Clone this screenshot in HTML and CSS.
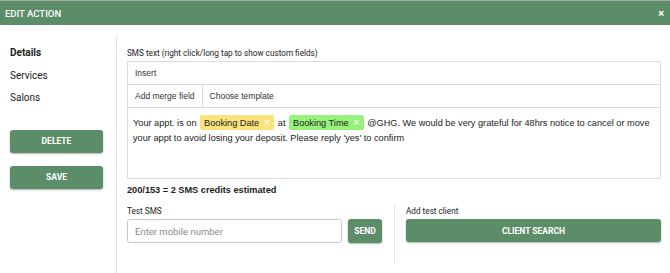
FILE: index.html
```html
<!DOCTYPE html>
<html lang="en">
<head>
    <meta charset="UTF-8">
    <meta name="viewport" content="width=device-width, initial-scale=1.0">
    <title>Edit Action</title>
    <link rel="stylesheet" href="styles.css">
</head>
<body>
    <div class="header">
        <span class="header-title">EDIT ACTION</span>
        <span class="header-close">&times;</span>
    </div>

    <div class="main">
        <div class="sidebar">
            <div class="nav-item active">Details</div>
            <div class="nav-item">Services</div>
            <div class="nav-item">Salons</div>

            <button class="green-button side-button delete-button">DELETE</button>
            <button class="green-button side-button">SAVE</button>
        </div>

        <div class="content">
            <div class="field-label">SMS text (right click/long tap to show custom fields)</div>
            <div class="sms-box">
                <div class="sms-row">
                    <div class="sms-cell">Insert</div>
                </div>
                <div class="sms-row">
                    <div class="sms-cell divided">Add merge field</div>
                    <div class="sms-cell">Choose template</div>
                </div>
                <div class="sms-text">
                    Your appt. is on <span class="tag tag-date">Booking Date <span class="tag-x">&times;</span></span> at <span class="tag tag-time">Booking Time <span class="tag-x">&times;</span></span> @GHG. We would be very grateful for 48hrs notice to cancel or move your appt to avoid losing your deposit. Please reply 'yes' to confirm
                </div>
            </div>

            <div class="credits">200/153 = 2 SMS credits estimated</div>

            <div class="test-row">
                <div class="test-sms">
                    <div class="field-label">Test SMS</div>
                    <div class="test-input-row">
                        <input type="text" class="mobile-input" placeholder="Enter mobile number">
                        <button class="green-button send-button">SEND</button>
                    </div>
                </div>
                <div class="test-client">
                    <div class="field-label">Add test client</div>
                    <button class="green-button client-button">CLIENT SEARCH</button>
                </div>
            </div>
        </div>
    </div>
</body>
</html>
```

FILE: styles.css
```css
body {
    margin: 0;
    font-family: Roboto, "Liberation Sans", Arial, sans-serif;
    color: #222;
    background-color: #fff;
}

.header {
    height: 24px;
    border-top: 1px solid #a9a9a9;
    background-color: #5b8d69;
    color: #fff;
    display: flex;
    justify-content: space-between;
    align-items: center;
    padding: 0 6px 0 5px;
}

.header-title {
    font-size: 9.5px;
    font-weight: 500;
}

.header-close {
    font-size: 11px;
    font-weight: bold;
}

.main {
    display: flex;
    margin-top: 11px;
    height: 238px;
}

.sidebar {
    width: 106px;
    padding-left: 10px;
    padding-top: 6px;
    border-right: 1px solid #e3e3e3;
}

.nav-item {
    font-size: 10px;
    line-height: 22.5px;
}

.nav-item.active {
    font-weight: bold;
}

.green-button {
    background-color: #5b8d69;
    color: #fff;
    border: none;
    border-radius: 3px;
    box-shadow: 0 1px 2px rgba(0, 0, 0, 0.3);
    font-family: Roboto, "Liberation Sans", Arial, sans-serif;
    font-weight: bold;
    font-size: 8.5px;
    cursor: pointer;
    padding: 0;
}

.side-button {
    display: block;
    width: 93px;
    height: 23px;
}

.delete-button {
    margin-top: 20px;
    margin-bottom: 13px;
}

.content {
    flex: 1;
    padding: 11px 9px 0 10px;
    font-family: "Liberation Sans", Arial, sans-serif;
}

.field-label {
    font-family: Roboto, "Liberation Sans", Arial, sans-serif;
    font-size: 8.2px;
    line-height: 12px;
    margin-bottom: 2px;
}

.sms-box {
    border: 1px solid #dcdcdc;
}

.sms-row {
    display: flex;
    height: 22px;
    border-bottom: 1px solid #dcdcdc;
    font-size: 8.5px;
    color: #333;
}

.sms-cell {
    display: flex;
    align-items: center;
    padding: 0 7px;
}

.sms-cell.divided {
    border-right: 1px solid #dcdcdc;
}

.sms-text {
    height: 57px;
    padding: 7px 2px 6px 5px;
    font-size: 9.2px;
    line-height: 15px;
}

.tag {
    display: inline-block;
    height: 15px;
    line-height: 15px;
    padding: 0 4px;
    border-radius: 2px;
    margin: 0 1px;
}

.tag-date {
    background-color: #fbe27a;
}

.tag-time {
    background-color: #97f27a;
}

.tag-x {
    color: #fff;
    font-size: 11px;
    margin-left: 2px;
}

.credits {
    font-weight: bold;
    font-size: 9.2px;
    line-height: 14px;
    margin-top: 4px;
    margin-bottom: 8px;
}

.test-row {
    display: flex;
}

.test-sms {
    width: 255px;
    padding-right: 12px;
    padding-bottom: 21px;
    border-right: 1px solid #e8e8e8;
}

.test-input-row {
    display: flex;
    gap: 6px;
}

.mobile-input {
    width: 215px;
    height: 24px;
    box-sizing: border-box;
    border: 1px solid #c9c9c9;
    border-radius: 3px;
    padding: 0 7px;
    font-family: Roboto, "Liberation Sans", Arial, sans-serif;
    font-size: 9.5px;
}

.mobile-input::placeholder {
    color: #8a8a8a;
}

.send-button {
    width: 34px;
    height: 24px;
}

.test-client {
    flex: 1;
    padding-left: 11px;
}

.client-button {
    display: block;
    width: 100%;
    height: 23px;
}
```
